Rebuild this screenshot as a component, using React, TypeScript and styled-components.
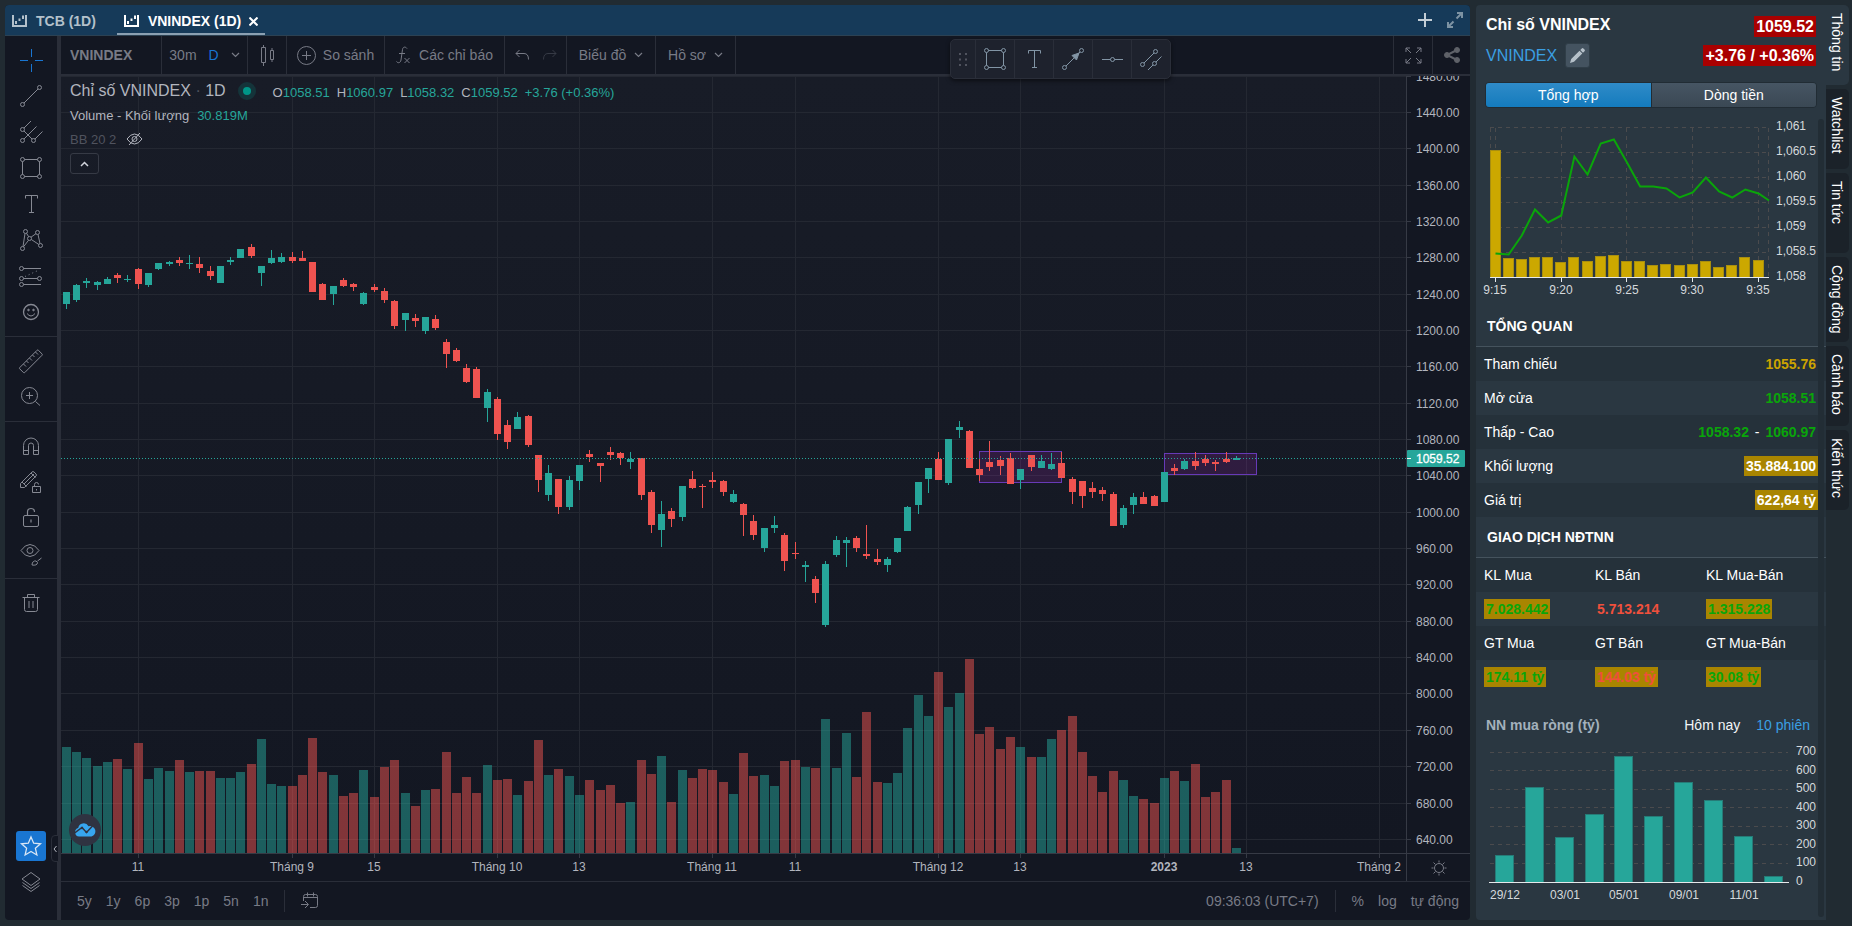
import React from "react";
import styled, { createGlobalStyle, css } from "styled-components";

const ARIAL = `"Liberation Sans", Arial, sans-serif`;
const UP = "#26a69a";
const DOWN = "#ef5350";
const AXIS = "#b2b5be";
const LINE = "#2a2e39";

const GlobalStyle = createGlobalStyle`
  *, *::before, *::after { box-sizing: border-box; }
  body { margin: 0; background: #212b32; font-family: ${ARIAL}; font-size: 14px; color: #fff; }
  button, input { font: inherit; color: inherit; background: none; border: 0; padding: 0; margin: 0; }
  button { cursor: pointer; }
  a { text-decoration: none; }
  svg { display: block; flex: none; }
`;

/* ---------- data ---------- */

type Candle = [dir: "g" | "r", high: number, top: number, bottom: number, low: number, volume: number];

const CANDLES: Candle[] = [
  ["g", 216, 216, 228, 233, 106], ["g", 208, 209, 224, 226, 101], ["g", 202, 205, 207, 212, 95],
  ["g", 205, 206, 209, 214, 87], ["g", 201, 203, 208, 208, 91], ["r", 197, 199, 202, 207, 94],
  ["g", 199, 203, 204, 206, 84], ["r", 192, 193, 208, 213, 110], ["g", 197, 197, 209, 211, 74],
  ["g", 187, 187, 193, 194, 85], ["g", 185, 186, 188, 190, 82], ["r", 181, 184, 187, 190, 93],
  ["g", 179, 187, 188, 193, 81], ["r", 181, 188, 192, 197, 82], ["r", 190, 195, 200, 204, 82],
  ["g", 190, 190, 207, 207, 75], ["g", 181, 184, 186, 189, 75], ["g", 173, 173, 182, 182, 81],
  ["r", 168, 171, 180, 182, 89], ["g", 190, 190, 197, 210, 114], ["g", 174, 182, 187, 188, 69],
  ["g", 177, 181, 186, 187, 67], ["r", 176, 181, 185, 187, 67], ["r", 175, 182, 185, 185, 78],
  ["r", 186, 186, 216, 216, 115], ["r", 207, 208, 224, 224, 81], ["g", 210, 210, 218, 229, 78],
  ["r", 202, 204, 210, 211, 57], ["r", 207, 208, 211, 215, 60], ["g", 216, 217, 228, 229, 83],
  ["r", 208, 211, 214, 216, 56], ["r", 212, 215, 224, 227, 86], ["r", 224, 225, 250, 253, 93],
  ["g", 237, 237, 244, 255, 60], ["r", 238, 242, 245, 251, 47], ["g", 241, 241, 255, 258, 63],
  ["r", 239, 243, 252, 254, 64], ["r", 263, 266, 278, 292, 101], ["r", 272, 274, 285, 286, 60],
  ["r", 288, 292, 306, 307, 76], ["r", 291, 293, 322, 322, 60], ["g", 313, 316, 332, 346, 88],
  ["r", 321, 323, 358, 364, 73], ["r", 344, 349, 366, 373, 74], ["g", 336, 341, 353, 353, 58],
  ["r", 339, 340, 369, 371, 72], ["r", 379, 379, 404, 416, 113], ["g", 389, 397, 419, 425, 78],
  ["r", 403, 403, 431, 438, 84], ["g", 400, 404, 431, 434, 77], ["g", 389, 389, 405, 414, 58],
  ["r", 374, 378, 381, 386, 73], ["r", 387, 387, 390, 406, 63], ["r", 371, 376, 379, 384, 68],
  ["r", 376, 377, 382, 389, 50], ["g", 376, 383, 386, 393, 51], ["r", 382, 382, 419, 424, 93],
  ["r", 414, 416, 449, 457, 79], ["g", 425, 438, 454, 471, 97], ["r", 432, 435, 443, 451, 51],
  ["g", 410, 410, 441, 445, 83], ["r", 395, 403, 412, 413, 75], ["r", 408, 410, 411, 432, 84],
  ["r", 396, 404, 406, 412, 83], ["r", 404, 405, 416, 420, 71], ["g", 414, 418, 426, 427, 59],
  ["r", 427, 428, 439, 460, 100], ["r", 439, 445, 459, 464, 77], ["g", 452, 452, 472, 476, 78],
  ["g", 440, 449, 452, 457, 67], ["r", 457, 459, 485, 495, 92], ["r", 466, 477, 478, 483, 93],
  ["g", 485, 489, 491, 506, 86], ["r", 500, 503, 517, 527, 85], ["g", 485, 488, 549, 551, 134],
  ["g", 460, 464, 479, 481, 85], ["g", 461, 464, 467, 491, 120], ["r", 460, 462, 472, 476, 76],
  ["r", 449, 478, 480, 483, 141], ["r", 473, 483, 486, 489, 71], ["g", 481, 483, 489, 496, 70],
  ["g", 462, 462, 476, 477, 80], ["g", 430, 431, 455, 455, 125], ["g", 406, 406, 429, 438, 158],
  ["g", 392, 392, 403, 417, 137], ["r", 376, 383, 404, 404, 181], ["g", 363, 363, 407, 409, 146],
  ["g", 345, 351, 354, 362, 160], ["r", 354, 355, 392, 392, 194], ["r", 383, 393, 399, 405, 119],
  ["r", 365, 386, 391, 395, 126], ["r", 380, 384, 390, 399, 104], ["r", 377, 382, 408, 408, 116],
  ["g", 393, 393, 404, 413, 106], ["r", 379, 379, 391, 395, 96], ["g", 379, 385, 392, 392, 96],
  ["g", 377, 388, 393, 394, 114], ["r", 376, 387, 402, 402, 123], ["r", 401, 403, 416, 428, 137],
  ["r", 405, 405, 420, 432, 101], ["r", 406, 412, 416, 422, 77], ["r", 411, 414, 418, 425, 61],
  ["r", 416, 418, 450, 450, 82], ["g", 429, 432, 449, 452, 73], ["g", 417, 421, 429, 438, 57],
  ["r", 416, 421, 428, 428, 54], ["r", 419, 420, 430, 430, 50], ["g", 396, 396, 426, 426, 75],
  ["r", 388, 392, 395, 399, 82], ["g", 383, 385, 393, 394, 72], ["r", 376, 385, 390, 394, 89],
  ["r", 379, 383, 387, 390, 56], ["r", 384, 386, 388, 395, 61], ["r", 376, 383, 386, 387, 73],
  ["g", 380, 382, 384, 384, 5],
];

const candleX = (i: number) => Math.floor(5.4 + i * 10.262);
const PRICES = Array.from({ length: 22 }, (_, k) => ({ y: Math.floor(k * 36.35), label: `${1480 - k * 40}.00` }));
const LAST_Y = 382;

const DATES: { i: number; label: string; bold?: boolean }[] = [
  { i: 7, label: "11" }, { i: 22, label: "Tháng 9" }, { i: 30, label: "15" }, { i: 42, label: "Tháng 10" },
  { i: 50, label: "13" }, { i: 63, label: "Tháng 11" }, { i: 71, label: "11" }, { i: 85, label: "Tháng 12" },
  { i: 93, label: "13" }, { i: 107, label: "2023", bold: true }, { i: 115, label: "13" }, { i: 128, label: "Tháng 2" },
];

const INTRADAY_VOLUME = [127, 19, 18, 20, 20, 15, 20, 16, 21, 22, 16, 16, 12, 13, 12, 13, 16, 10, 12, 20, 17];
const INTRADAY_LINE = [138, 139, 120, 94, 107, 100, 41, 59, 28, 24, 47, 71, 71, 73, 82, 77, 62, 76, 82, 74, 78, 85];
const NET_BUY = [27, 95, 45, 68, 126, 66, 100, 82, 46, 6];

/* ---------- icons ---------- */

const Svg = styled.svg.attrs<{ $w?: number; $h?: number }>((p) => ({
  width: p.$w ?? 28,
  height: p.$h ?? p.$w ?? 28,
  fill: "none",
  stroke: "currentColor",
  "aria-hidden": true,
}))<{ $w?: number; $h?: number }>``;

const Dot = ({ x, y, r = 2 }: { x: number; y: number; r?: number }) => <circle cx={x} cy={y} r={r} />;

const RectIcon = () => (
  <Svg viewBox="0 0 28 28">
    <Dot x={5.5} y={5.5} /><Dot x={22.5} y={5.5} /><Dot x={5.5} y={22.5} /><Dot x={22.5} y={22.5} />
    <path d="M7.5 5.5h13M7.5 22.5h13M5.5 7.5v13M22.5 7.5v13" />
  </Svg>
);
const TextIcon = () => (
  <Svg viewBox="0 0 28 28"><path d="M8.5 8.5v-3h12v3M14.5 5.5v17M12 22.5h5" /></Svg>
);
const LineIcon = () => (
  <Svg viewBox="0 0 28 28"><Dot x={22.5} y={5.5} /><Dot x={5.5} y={22.5} /><path d="M7 21L21 7" /></Svg>
);

const TOOL_GROUPS: { name: string; icon: React.ReactNode; active?: boolean }[][] = [
  [
    { name: "Con trỏ", active: true, icon: <Svg viewBox="0 0 28 28"><path d="M3 14.5h8M18 14.5h8M14.5 3v8M14.5 18v8" /></Svg> },
    { name: "Đường xu hướng", icon: <LineIcon /> },
    {
      name: "Pitchfork",
      icon: (
        <Svg viewBox="0 0 28 28">
          <Dot x={5.5} y={11.5} /><Dot x={5.5} y={22.5} /><Dot x={16.5} y={22.5} />
          <path d="M7 10l7-7M7 13l8 8M7 21L19.500 8.500M18 21l7.500-7.500" />
        </Svg>
      ),
    },
    { name: "Hình chữ nhật", icon: <RectIcon /> },
    { name: "Văn bản", icon: <TextIcon /> },
    {
      name: "Mẫu XABCD",
      icon: (
        <Svg viewBox="0 0 28 28">
          <Dot x={8.5} y={5.5} /><Dot x={20.5} y={6.5} /><Dot x={12.5} y={12.5} /><Dot x={5.5} y={22.5} /><Dot x={23.5} y={19.5} />
          <path d="M6 20.500L8 7.500M9.500 7.200l2.200 3.600M14 11.200l5-3.600M21 8.500l2 9M14.300 13.500l7.600 5M11.500 14.300l-5 6.500" />
        </Svg>
      ),
    },
    {
      name: "Dự báo",
      icon: (
        <Svg viewBox="0 0 28 28">
          <Dot x={4.5} y={6.5} /><Dot x={4.5} y={16.5} /><Dot x={22.5} y={16.5} /><Dot x={4.5} y={22.5} />
          <path d="M6.500 6.500H24M6.500 16.500h14M6.500 22.500H24" /><path d="M8 14.500L22 8" strokeDasharray="1 3" />
        </Svg>
      ),
    },
    {
      name: "Biểu tượng",
      icon: (
        <Svg viewBox="0 0 28 28">
          <circle cx="14" cy="14" r="7.500" strokeWidth="1.300" />
          <circle cx="11.500" cy="12" r="0.800" fill="currentColor" /><circle cx="16.500" cy="12" r="0.800" fill="currentColor" />
          <path d="M10 15.500q4 5 8 0" />
        </Svg>
      ),
    },
  ],
  [
    {
      name: "Thước đo",
      icon: (
        <Svg viewBox="0 0 28 28">
          <path d="M2.800 20.500L20 3.300q.7-.7 1.400 0l3.600 3.600q.7.7 0 1.400L7.800 25.500q-.7.7-1.400 0l-3.600-3.600q-.7-.7 0-1.400z" />
          <path d="M6.500 17l2.500 2.500M9.500 14l2 2M12.500 11l2.500 2.500M15.500 8l2 2M18.500 5l2.500 2.500" />
        </Svg>
      ),
    },
    {
      name: "Phóng to",
      icon: <Svg viewBox="0 0 28 28"><circle cx="12.500" cy="12.500" r="8" /><path d="M9 12.500h7M12.500 9v7M18.500 18.500l4.500 4" /></Svg>,
    },
  ],
  [
    {
      name: "Nam châm",
      icon: (
        <Svg viewBox="0 0 28 28">
          <path d="M6.500 22.500v-9a7.500 7.500 0 0 1 15 0v9h-5v-9a2.500 2.500 0 0 0-5 0v9zM6.500 18.500h5M16.500 18.500h5" />
        </Svg>
      ),
    },
    {
      name: "Vẽ liên tục",
      icon: (
        <Svg viewBox="0 0 28 28">
          <path d="M3.500 15.500L15 4q1-1 2 0l2 2q1 1 0 2L7.500 19.500h-4zM5 14l4.500 4.500M7 16L17 6M14 5l4.500 4.500" />
          <path d="M15.500 18.500h8v6h-8zM17.500 18.500v-2a2 2 0 0 1 4 0M19.500 21v1.500" />
        </Svg>
      ),
    },
    {
      name: "Khóa hình vẽ",
      icon: <Svg viewBox="0 0 28 28"><rect x="6.500" y="11.500" width="15" height="11" rx="1.500" /><path d="M10.500 11.500V8a3.500 3.500 0 0 1 7 0M14 15.500v3" strokeWidth="1.200" /></Svg>,
    },
    {
      name: "Ẩn hình vẽ",
      icon: (
        <Svg viewBox="0 0 28 28">
          <path d="M4 10.500Q8 4.500 13 4.500t9 6q-4 6-9 6t-9-6z" /><circle cx="13" cy="10.500" r="3" />
          <path d="M15 25c0-3 2-4.500 4-4l1.500 1.500C20.500 25 18 25.500 15 25zM20.500 21l4-3" />
        </Svg>
      ),
    },
  ],
  [
    {
      name: "Xóa hình vẽ",
      icon: <Svg viewBox="0 0 28 28"><path d="M5.500 8.500h17M7.500 8.500v12q0 2 2 2h9q2 0 2-2v-12M10.500 8V5.500h7V8M12 12v7M16 12v7" /></Svg>,
    },
  ],
];

const BarsIcon = () => (
  <Svg $w={16} $h={14} viewBox="0 0 16 14">
    <path d="M1 1v11h14M14 1v11" strokeWidth="2" />
    <path d="M4 10V7M7.500 7V4.500M11 5V1.500" strokeWidth="2" />
  </Svg>
);
const Chevron = () => <Svg $w={9} $h={6} viewBox="0 0 9 6"><path d="M1 1l3.500 3.500L8 1" strokeWidth="1.200" /></Svg>;

/* ---------- frame ---------- */

const Page = styled.div`
  display: flex;
  gap: 6px;
  height: 100vh;
  min-height: 640px;
  padding: 5px 3px 6px 5px;
`;
const Workspace = styled.main`
  flex: 1;
  min-width: 0;
  display: flex;
  flex-direction: column;
  border-radius: 4px;
  overflow: hidden;
  background: #131722;
`;
const TabBar = styled.nav`
  display: flex;
  align-items: stretch;
  gap: 14px;
  height: 31px;
  padding: 0 7px 0 0;
  background: #163a59;
  border-bottom: 1px solid #2c4152;
`;
const ChartTab = styled.button<{ $active?: boolean }>`
  display: flex;
  align-items: center;
  gap: 8px;
  padding: 4px 7px 0;
  font-weight: bold;
  color: ${(p) => (p.$active ? "#fff" : "#b4c1cb")};
  border-bottom: 2px solid ${(p) => (p.$active ? "#8ba0b2" : "transparent")};
`;
const TabBarEnd = styled.div`
  display: flex;
  align-items: center;
  gap: 15px;
  margin-left: auto;
`;
const IconButton = styled.button<{ $color?: string }>`
  display: flex;
  align-items: center;
  justify-content: center;
  color: ${(p) => p.$color ?? "#787b86"};
`;
const Body = styled.div`
  flex: 1;
  min-height: 0;
  display: flex;
`;
const ToolColumn = styled.aside`
  position: relative;
  display: flex;
  flex-direction: column;
  width: 56px;
  border-right: 4px solid ${LINE};
`;
const ToolGroup = styled.div`
  display: flex;
  flex-direction: column;
  padding: 6px 0;
  border-bottom: 1px solid ${LINE};
  &:nth-last-child(-n + 3) { border-bottom: 0; }
`;
const Tool = styled.button<{ $active?: boolean }>`
  display: flex;
  align-items: center;
  justify-content: center;
  height: 36px;
  color: ${(p) => (p.$active ? "#1976d2" : "#868993")};
`;
const BottomTools = styled.div`
  display: flex;
  flex-direction: column;
  align-items: center;
  margin-top: auto;
  padding-bottom: 20px;
`;
const Favourite = styled.button`
  display: flex;
  align-items: center;
  justify-content: center;
  width: 30px;
  height: 30px;
  margin-bottom: 3px;
  border-radius: 3px;
  background: #1976d2;
  color: #d8e6f5;
`;
const Collapse = styled.button`
  position: absolute;
  right: -2px;
  bottom: 58px;
  width: 8px;
  height: 27px;
  display: flex;
  align-items: center;
  justify-content: center;
  background: #131722;
  border: 1px solid ${LINE};
  border-radius: 4px 0 0 4px;
  color: #b2b5be;
`;
const ChartColumn = styled.section`
  flex: 1;
  min-width: 0;
  display: flex;
  flex-direction: column;
`;

/* ---------- top toolbar ---------- */

const Toolbar = styled.div`
  position: relative;
  display: flex;
  height: 40px;
  border-bottom: 2px solid ${LINE};
  color: #787b86;
`;
const Cell = styled.div<{ $w: number; $gap?: number; $end?: boolean }>`
  display: flex;
  align-items: center;
  justify-content: center;
  gap: ${(p) => p.$gap ?? 8}px;
  width: ${(p) => p.$w}px;
  flex: none;
  ${(p) => (p.$end ? css`border-left: 1px solid ${LINE};` : css`border-right: 1px solid ${LINE};`)}
`;
const SymbolInput = styled.input`
  width: 100%;
  height: 100%;
  padding: 0 9px;
  font-weight: bold;
`;
const TextButton = styled.button<{ $active?: boolean; $gap?: number }>`
  display: flex;
  align-items: center;
  gap: ${(p) => p.$gap ?? 6}px;
  color: ${(p) => (p.$active ? "#1976d2" : "inherit")};
`;
const Spacer = styled.div`flex: 1;`;
const FloatingTools = styled.div`
  position: absolute;
  z-index: 2;
  top: 3px;
  left: 889px;
  display: flex;
  height: 40px;
  background: #1e222d;
  border: 1px solid ${LINE};
  border-radius: 5px;
  box-shadow: 0 2px 4px rgba(0, 0, 0, 0.5);
  overflow: hidden;
`;
const Grip = styled.div`
  display: flex;
  align-items: center;
  justify-content: center;
  width: 24px;
  color: #50535e;
`;
const FloatButton = styled.button`
  display: flex;
  align-items: center;
  justify-content: center;
  width: 39px;
  border-left: 1px solid ${LINE};
  color: #8295a5;
`;

/* ---------- chart ---------- */

const ChartArea = styled.div`
  position: relative;
  flex: 1;
  min-height: 0;
  display: flex;
`;
const Plot = styled.div`
  flex: 1;
  min-width: 0;
  background: linear-gradient(#181c27, #131722);
`;
const Canvas = styled.svg`
  width: 100%;
  height: 100%;
`;
const PriceAxis = styled.div`
  width: 64px;
  border-left: 1px solid #363a45;
`;
const TimeRow = styled.div`
  display: flex;
  height: 29px;
  border-top: 1px solid #363a45;
  border-bottom: 1px solid ${LINE};
`;
const TimeAxis = styled.div`
  flex: 1;
  min-width: 0;
`;
const TimeEnd = styled.div`
  display: flex;
  align-items: center;
  justify-content: center;
  width: 64px;
  border-left: 1px solid #363a45;
`;
const Legend = styled.div`
  position: absolute;
  top: 3px;
  left: 9px;
  display: flex;
  flex-direction: column;
  align-items: flex-start;
`;
const LegendRow = styled.div<{ $gap?: number; $muted?: boolean }>`
  display: flex;
  align-items: center;
  gap: ${(p) => p.$gap ?? 8}px;
  height: 24px;
  font-size: 13px;
  color: ${(p) => (p.$muted ? "#50535e" : "#b2b5be")};
`;
const SymbolTitle = styled.h1`
  margin: 0;
  font-size: 16px;
  font-weight: normal;
`;
const Separator = styled.span`color: #50535e;`;
const Ohlc = styled.div`
  display: flex;
  gap: 7px;
  padding: 3px 0 0 9px;
`;
const Value = styled.span`color: ${UP};`;
const Status = styled.span`
  width: 18px;
  height: 18px;
  margin-left: 4px;
  border: 5px solid #14343a;
  border-radius: 50%;
  background: #009688;
`;
const LegendToggle = styled.button`
  display: flex;
  align-items: center;
  justify-content: center;
  width: 29px;
  height: 21px;
  margin-top: 2px;
  border: 1px solid #363a45;
  border-radius: 3px;
  color: #d1d4dc;
`;
const Watermark = styled.a`
  position: absolute;
  left: 8px;
  bottom: 7px;
  display: flex;
  align-items: center;
  justify-content: center;
  width: 32px;
  height: 32px;
  border-radius: 50%;
  background: #2f3341;
`;
const BottomBar = styled.div`
  display: flex;
  align-items: center;
  height: 38px;
  padding: 0 11px 0 16px;
  color: #787b86;
`;
const Ranges = styled.div`
  display: flex;
  gap: 14px;
`;
const VRule = styled.div`
  width: 1px;
  height: 22px;
  margin: 0 16px;
  background: ${LINE};
`;
const Scales = styled.div`
  display: flex;
  gap: 14px;
`;

/* ---------- info panel ---------- */

const Side = styled.aside`
  display: flex;
  width: 373px;
  flex: none;
`;
const Panel = styled.section`
  position: relative;
  display: flex;
  flex-direction: column;
  width: 350px;
  background: #2a3741;
  border-radius: 4px 0 0 4px;
  overflow: hidden;
`;
const PanelHead = styled.header`
  display: grid;
  grid-template-columns: auto auto;
  justify-content: space-between;
  align-items: center;
  row-gap: 4px;
  flex: none;
  padding: 8px 10px 14px;
  font-size: 16px;
`;
const PanelTitle = styled.h2`
  margin: 0;
  padding-bottom: 2px;
  font-size: 16px;
  line-height: 24px;
`;
const Ticker = styled.div`
  display: flex;
  align-items: center;
  gap: 8px;
`;
const Link = styled.a`color: #3b9fe2;`;
const EditButton = styled.button`
  display: flex;
  align-items: center;
  justify-content: center;
  width: 25px;
  height: 25px;
  border-radius: 3px;
  background: #445360;
  border: 1px solid #303e48;
  color: #b5c0c9;
`;
const PriceTag = styled.strong`
  justify-self: end;
  padding: 0 2px;
  line-height: 21px;
  background: #a90000;
`;
const Segments = styled.div`
  display: flex;
  flex: none;
  height: 26px;
  margin: 0 9px;
  border: 1px solid #212c34;
  border-radius: 4px;
  overflow: hidden;
`;
const Segment = styled.button<{ $active?: boolean }>`
  flex: 1;
  background: ${(p) => (p.$active ? "linear-gradient(#2f8bc8, #147bbd)" : "linear-gradient(#465563, #3a4854)")};
  & + & { border-left: 1px solid #212c34; }
`;
const MiniChart = styled.div<{ $h: number }>`
  height: ${(p) => p.$h}px;
  flex: none;
`;
const SectionTitle = styled.h3`
  margin: 0;
  height: 41px;
  flex: none;
  padding: 0 11px;
  font-size: 14px;
  line-height: 40px;
  border-bottom: 1px solid #45535d;
`;
const Table = styled.table`
  width: 100%;
  flex: none;
  border-collapse: collapse;
  table-layout: fixed;
  tr:nth-child(odd) { background: #25313a; }
  th, td { height: 34px; padding: 0 0 0 8px; font-weight: normal; text-align: left; }
`;
const Overview = styled(Table)`
  td { padding: 0 8px 0 0; text-align: right; }
`;
const Trades = styled(Table)`
  th:nth-child(-n + 2), td:nth-child(-n + 2) { width: 111px; }
`;
const Num = styled.strong<{ $color: string; $flash?: boolean }>`
  display: inline-block;
  padding: 0 2px;
  line-height: 20px;
  color: ${(p) => p.$color};
  background: ${(p) => (p.$flash ? "#a98500" : "transparent")};
`;
const NetHead = styled.div`
  display: flex;
  align-items: center;
  gap: 16px;
  height: 46px;
  flex: none;
  padding: 16px 16px 0 10px;
`;
const NetTitle = styled.strong`
  flex: 1;
  color: #a3b1bc;
`;
const Period = styled.button<{ $link?: boolean }>`
  color: ${(p) => (p.$link ? "#3b9fe2" : "#f2f5f7")};
`;
const Scrollbar = styled.div`
  position: absolute;
  right: 2px;
  top: 114px;
  bottom: 3px;
  width: 6px;
  border-radius: 3px;
  background: #222d35;
`;
const SideTabs = styled.nav`
  display: flex;
  flex-direction: column;
  gap: 4px;
  width: 23px;
`;
const SideTab = styled.button<{ $active?: boolean }>`
  min-height: 80px;
  padding: 8px 2px 8px 0;
  writing-mode: vertical-rl;
  text-align: start;
  line-height: 21px;
  border-radius: 0 5px 5px 0;
  background: ${(p) => (p.$active ? "#2a3741" : "#1b2229")};
`;

const GREEN = "#0aa50a";
const RED = "#f0503c";

const PriceChart = () => (
  <Canvas shapeRendering="crispEdges" role="img" aria-label="Biểu đồ giá VNINDEX">
    {PRICES.map((p) => <rect key={p.y} x="0" y={p.y} width="100%" height="1" fill="#242832" />)}
    {DATES.map((d) => <rect key={d.i} x={candleX(d.i)} y="0" width="1" height="100%" fill="#242832" />)}
    <svg y="100%" overflow="visible">
      {CANDLES.map(([dir, , , , , v], i) => (
        <rect key={i} x={candleX(i) - 4} y={-v} width="9" height={v} fill={dir === "g" ? UP : DOWN} opacity="0.5" />
      ))}
    </svg>
    <rect x="918.5" y="375.5" width="82" height="31" fill="rgba(156,39,176,0.2)" stroke="#673ab7" />
    <rect x="1103.5" y="377.5" width="92" height="21" fill="rgba(156,39,176,0.2)" stroke="#673ab7" />
    {CANDLES.map(([dir, h, t, b, l], i) => (
      <g key={i} fill={dir === "g" ? UP : DOWN}>
        <rect x={candleX(i)} y={h} width="1" height={l - h} />
        <rect x={candleX(i) - 3} y={t} width="7" height={b - t} />
      </g>
    ))}
    <line x1="0" x2="100%" y1={LAST_Y + 0.5} y2={LAST_Y + 0.5} stroke={UP} strokeDasharray="1 2" />
  </Canvas>
);

const IntradayChart = () => (
  <Canvas role="img" aria-label="Diễn biến trong phiên">
    <g stroke="#4b4b4d" strokeDasharray="4 4" shapeRendering="crispEdges">
      {[0, 1, 2, 3, 4, 5].map((k) => <path key={k} d={`M14 ${19.5 + k * 25}H293`} />)}
      {[14.5, 19.5, 85.5, 150.5, 216.5, 282.5, 292.5].map((x) => <path key={x} d={`M${x} 19.500V169`} />)}
    </g>
    {INTRADAY_VOLUME.map((v, i) => (
      <rect key={i} x={Math.floor(14 + i * 13.15) + 0.5} y={169.5 - v} width="10" height={v} fill="#cca800" stroke="#a88e10" />
    ))}
    <path d="M14 169.500H293M19.500 169v5M85.500 169v5M150.500 169v5M216.500 169v5M282.500 169v5" stroke="#e6e9eb" shapeRendering="crispEdges" />
    <polyline
      points={INTRADAY_LINE.map((y, i) => `${Math.min(19.5 + i * 13.15, 293)},${y + 7.5}`).join(" ")}
      fill="none" stroke="#0aa50a" strokeWidth="2"
    />
    <g fill="#d5d9dc" fontSize="12">
      {["1,061", "1,060.5", "1,060", "1,059.5", "1,059", "1,058.5", "1,058"].map((t, k) => (
        <text key={t} x="300" y={22 + k * 25}>{t}</text>
      ))}
      {["9:15", "9:20", "9:25", "9:30", "9:35"].map((t, k) => (
        <text key={t} x={19 + Math.round(k * 65.75)} y="186" textAnchor="middle">{t}</text>
      ))}
    </g>
  </Canvas>
);

const NetChart = () => (
  <Canvas role="img" aria-label="Nước ngoài mua ròng 10 phiên">
    <g stroke="#4b4b4d" strokeDasharray="4 4" shapeRendering="crispEdges">
      {[0, 1, 2, 3, 4, 5, 6].map((k) => <path key={k} d={`M14 ${Math.floor(k * 18.57) + 12.5}H312`} />)}
    </g>
    {NET_BUY.map((v, i) => (
      <rect key={i} x={Math.round(20 + i * 29.87) - 0.5} y={142.5 - v} width="18" height={v} fill={UP} stroke="#267b77" />
    ))}
    <path d="M13 142.500H313" stroke="#e6e9eb" />
    <g fill="#d5d9dc" fontSize="12">
      {[700, 600, 500, 400, 300, 200, 100, 0].map((t, k) => (
        <text key={t} x="320" y={Math.round(15 + k * 18.57)}>{t}</text>
      ))}
      {["29/12", "03/01", "05/01", "09/01", "11/01"].map((t, k) => (
        <text key={t} x={Math.round(29 + k * 59.74)} y="159" textAnchor="middle">{t}</text>
      ))}
    </g>
  </Canvas>
);

export default function App() {
  return (
    <>
      <GlobalStyle />
      <Page>
        <Workspace>
          <TabBar>
            <ChartTab><BarsIcon />TCB (1D)</ChartTab>
            <ChartTab $active>
              <BarsIcon />VNINDEX (1D)
              <Svg $w={9} viewBox="0 0 9 9"><path d="M.5.5l8 8M8.500.5l-8 8" strokeWidth="2" /></Svg>
            </ChartTab>
            <TabBarEnd>
              <IconButton $color="#c3ced6" aria-label="Thêm biểu đồ">
                <Svg $w={14} viewBox="0 0 14 14"><path d="M7 0v14M0 7h14" strokeWidth="2" /></Svg>
              </IconButton>
              <IconButton $color="#7d93a3" aria-label="Mở rộng">
                <Svg $w={16} viewBox="0 0 16 16"><path d="M10 1h5v5M15 1L9.500 6.500M6 15H1v-5M1 15l5.500-5.500" strokeWidth="2" /></Svg>
              </IconButton>
            </TabBarEnd>
          </TabBar>
          <Body>
            <ToolColumn>
              {TOOL_GROUPS.map((group, g) => (
                <ToolGroup key={g}>
                  {group.map((t) => <Tool key={t.name} $active={t.active} aria-label={t.name}>{t.icon}</Tool>)}
                </ToolGroup>
              ))}
              <BottomTools>
                <Favourite aria-label="Công cụ yêu thích">
                  <Svg viewBox="0 0 28 28"><path d="M14 5l2.700 6.200 6.800.6-5.100 4.500 1.500 6.700-5.900-3.500L8.100 23l1.500-6.700-5.100-4.500 6.800-.6z" strokeWidth="1.300" /></Svg>
                </Favourite>
                <Tool aria-label="Cây đối tượng">
                  <Svg viewBox="0 0 28 28"><path d="M14 4.500l9 6.500-9 6.500L5 11zM5.500 14.500l8.500 6 8.500-6M5.500 17.500l8.500 6 8.500-6" /></Svg>
                </Tool>
              </BottomTools>
              <Collapse aria-label="Thu gọn">
                <Svg $w={4} $h={8} viewBox="0 0 4 8"><path d="M3.500 1L1 4l2.500 3" /></Svg>
              </Collapse>
            </ToolColumn>
            <ChartColumn>
              <Toolbar>
                <Cell $w={101}><SymbolInput aria-label="Mã" defaultValue="VNINDEX" /></Cell>
                <Cell $w={86} $gap={12}>
                  <TextButton>30m</TextButton>
                  <TextButton $active>D</TextButton>
                  <IconButton aria-label="Khung thời gian"><Chevron /></IconButton>
                </Cell>
                <Cell $w={39}>
                  <IconButton aria-label="Kiểu nến">
                    <Svg viewBox="0 0 28 28"><path d="M8.500 6.500h4v15h-4zM10.500 4v2.500M10.500 21.500V25M17.500 9.500h3v9h-3zM19 7v2.500M19 18.500V21" /></Svg>
                  </IconButton>
                </Cell>
                <Cell $w={98}>
                  <TextButton $gap={7}>
                    <Svg $w={19} viewBox="0 0 19 19"><circle cx="9.500" cy="9.500" r="9" /><path d="M9.500 5v9M5 9.500h9" /></Svg>
                    So sánh
                  </TextButton>
                </Cell>
                <Cell $w={120}>
                  <TextButton $gap={8}>
                    <Svg $w={15} $h={18} viewBox="0 0 15 18">
                      <path d="M11 2.500C9.500.5 7 .5 6.500 3.500L5 14c-.5 3-3 3.500-4.500 1.500M3 7.500h6M8.500 12l5 5M13.500 12l-5 5" />
                    </Svg>
                    Các chỉ báo
                  </TextButton>
                </Cell>
                <Cell $w={62} $gap={14}>
                  <IconButton aria-label="Hoàn tác"><Svg $w={14} $h={12} viewBox="0 0 14 12"><path d="M4.500 1L1 4.500 4.500 8M1 4.500h8q4.500 0 4.500 6" /></Svg></IconButton>
                  <IconButton $color="#363a45" aria-label="Làm lại"><Svg $w={14} $h={12} viewBox="0 0 14 12"><path d="M9.500 1L13 4.500 9.500 8M13 4.500H5q-4.500 0-4.500 6" /></Svg></IconButton>
                </Cell>
                <Cell $w={89}><TextButton $gap={8}>Biểu đồ<Chevron /></TextButton></Cell>
                <Cell $w={80}><TextButton $gap={8}>Hồ sơ<Chevron /></TextButton></Cell>
                <Spacer />
                <Cell $w={39} $end>
                  <IconButton aria-label="Toàn màn hình">
                    <Svg $w={17} viewBox="0 0 17 17"><path d="M1 5V1h4M1 1l5 5M12 1h4v4M16 1l-5 5M16 12v4h-4M16 16l-5-5M5 16H1v-4M1 16l5-5" /></Svg>
                  </IconButton>
                </Cell>
                <Cell $w={38} $end>
                  <IconButton $color="#5f6269" aria-label="Chia sẻ">
                    <Svg $w={16} viewBox="0 0 16 16"><path d="M13 3L3 8l10 5" strokeWidth="2" /><g fill="currentColor"><Dot x={13} y={3} r={2.5} /><Dot x={3} y={8} r={2.5} /><Dot x={13} y={13} r={2.5} /></g></Svg>
                  </IconButton>
                </Cell>
                <FloatingTools>
                  <Grip>
                    <Svg $w={8} $h={13} viewBox="0 0 8 13"><path d="M0 1h2M6 1h2M0 6.500h2M6 6.500h2M0 12h2M6 12h2" strokeWidth="2" /></Svg>
                  </Grip>
                  <FloatButton aria-label="Hình chữ nhật"><RectIcon /></FloatButton>
                  <FloatButton aria-label="Văn bản"><TextIcon /></FloatButton>
                  <FloatButton aria-label="Mũi tên">
                    <Svg viewBox="0 0 28 28"><Dot x={22.5} y={5.5} /><Dot x={5.5} y={22.5} /><path d="M7 21L21 7" /><path d="M20 8l-2.500 7-4.500-4.500z" fill="currentColor" /></Svg>
                  </FloatButton>
                  <FloatButton aria-label="Đường ngang"><Svg viewBox="0 0 28 28"><Dot x={14.5} y={14.5} /><path d="M4 14.500h8.500M16.500 14.500H25" /></Svg></FloatButton>
                  <FloatButton aria-label="Kênh song song">
                    <Svg viewBox="0 0 28 28"><Dot x={18.5} y={6.5} /><Dot x={5.5} y={19.5} /><Dot x={17.5} y={18.5} /><path d="M7 18L17 8M11 25l5-5M19 17l5.500-5.500" /></Svg>
                  </FloatButton>
                </FloatingTools>
              </Toolbar>
              <ChartArea>
                <Plot><PriceChart /></Plot>
                <PriceAxis>
                  <Canvas fontSize="12" fill={AXIS}>
                    {PRICES.map((p) => (
                      <g key={p.y}>
                        <rect x="0" y={p.y} width="4" height="1" fill="#363a45" />
                        <text x="9" y={p.y + 5}>{p.label}</text>
                      </g>
                    ))}
                    <rect x="0" y={LAST_Y - 8} width="58" height="17" rx="1" fill={UP} />
                    <rect x="0" y={LAST_Y} width="4" height="1" fill="#fff" />
                    <text x="9" y={LAST_Y + 5} fill="#fff" stroke="#fff" strokeWidth="0.300">1059.52</text>
                  </Canvas>
                </PriceAxis>
                <Legend>
                  <LegendRow>
                    <SymbolTitle>Chỉ số VNINDEX <Separator>·</Separator> 1D</SymbolTitle>
                    <Status />
                    <Ohlc>
                      <span>O<Value>1058.51</Value></span>
                      <span>H<Value>1060.97</Value></span>
                      <span>L<Value>1058.32</Value></span>
                      <span>C<Value>1059.52</Value></span>
                      <Value>+3.76 (+0.36%)</Value>
                    </Ohlc>
                  </LegendRow>
                  <LegendRow><span>Volume - Khối lượng</span><Value>30.819M</Value></LegendRow>
                  <LegendRow $gap={10} $muted>
                    <span>BB 20 2</span>
                    <IconButton $color="#b2b5be" aria-label="Hiện BB">
                      <Svg $w={17} $h={14} viewBox="0 0 17 14"><path d="M1 7q3.500-5 7.500-5T16 7q-3.500 5-7.500 5T1 7zM14 1L3 13" /><circle cx="8.500" cy="7" r="2.500" /></Svg>
                    </IconButton>
                  </LegendRow>
                  <LegendToggle aria-label="Thu gọn chú giải"><Svg $w={9} $h={6} viewBox="0 0 9 6"><path d="M1 5l3.500-3.500L8 5" strokeWidth="1.500" /></Svg></LegendToggle>
                </Legend>
                <Watermark href="#" aria-label="TradingView">
                  <svg width="22" height="14" viewBox="0 0 22 14">
                    <path d="M5 13.500a4.300 4.300 0 0 1-.8-8.400A5.500 5.500 0 0 1 14.500 3.200 5.200 5.200 0 0 1 17.500 13.500z" fill="#37a6ef" />
                    <path d="M0 10.500L8 4.500l4.500 5L18.500 3" fill="none" stroke="#2f3341" strokeWidth="1.500" />
                    <circle cx="8" cy="5" r="1.200" fill="#2f3341" /><circle cx="12.500" cy="9" r="1.200" fill="#2f3341" />
                  </svg>
                </Watermark>
              </ChartArea>
              <TimeRow>
                <TimeAxis>
                  <Canvas fontSize="12" fill={AXIS}>
                    {DATES.map((d) => (
                      <g key={d.i}>
                        <rect x={candleX(d.i)} y="0" width="1" height="4" fill="#363a45" />
                        <text x={candleX(d.i)} y="17" textAnchor="middle" fontWeight={d.bold ? "bold" : "normal"}>{d.label}</text>
                      </g>
                    ))}
                  </Canvas>
                </TimeAxis>
                <TimeEnd>
                  <IconButton aria-label="Cài đặt trục">
                    <Svg $w={16} viewBox="0 0 16 16"><circle cx="8" cy="8" r="4.500" /><path d="M8 .5v2M8 13.500v2M.5 8h2M13.500 8h2M2.500 2.500L4.500 4.500M11.500 11.500l2 2M2.500 13.500l2-2M11.500 4.500l2-2" /></Svg>
                  </IconButton>
                </TimeEnd>
              </TimeRow>
              <BottomBar>
                <Ranges>
                  {["5y", "1y", "6p", "3p", "1p", "5n", "1n"].map((r) => <TextButton key={r}>{r}</TextButton>)}
                </Ranges>
                <VRule />
                <IconButton aria-label="Đi đến ngày">
                  <Svg $w={18} viewBox="0 0 18 18"><path d="M2.500 9V4.500q0-2 2-2h10q2 0 2 2v9q0 2-2 2H9M2.500 5.500h14M6.500.5v4M12.500.5v4M0 12.500h7M4 9l3.500 3.500L4 16" /></Svg>
                </IconButton>
                <Spacer />
                <TextButton>09:36:03 (UTC+7)</TextButton>
                <VRule />
                <Scales><TextButton>%</TextButton><TextButton>log</TextButton><TextButton>tự động</TextButton></Scales>
              </BottomBar>
            </ChartColumn>
          </Body>
        </Workspace>

        <Side>
          <Panel>
            <PanelHead>
              <PanelTitle>Chỉ số VNINDEX</PanelTitle>
              <PriceTag>1059.52</PriceTag>
              <Ticker>
                <Link href="#">VNINDEX</Link>
                <EditButton aria-label="Sửa">
                  <svg width="15" height="15" viewBox="0 0 15 15" fill="currentColor"><path d="M0 15l1.200-4L9.500 2.700l2.800 2.800L4 13.800zM10.300 2l1.500-1.500q.8-.8 1.600 0l1.100 1.100q.8.8 0 1.600L13 4.700z" /></svg>
                </EditButton>
              </Ticker>
              <PriceTag>+3.76 / +0.36%</PriceTag>
            </PanelHead>
            <Segments>
              <Segment $active>Tổng hợp</Segment>
              <Segment>Dòng tiền</Segment>
            </Segments>
            <MiniChart $h={198}><IntradayChart /></MiniChart>
            <SectionTitle>TỔNG QUAN</SectionTitle>
            <Overview>
              <tbody>
                <tr><th scope="row">Tham chiếu</th><td><Num $color="#cca300">1055.76</Num></td></tr>
                <tr><th scope="row">Mở cửa</th><td><Num $color={GREEN}>1058.51</Num></td></tr>
                <tr><th scope="row">Thấp - Cao</th><td><Num $color={GREEN}>1058.32</Num> - <Num $color={GREEN}>1060.97</Num></td></tr>
                <tr><th scope="row">Khối lượng</th><td><Num $color="#fff" $flash>35.884.100</Num></td></tr>
                <tr><th scope="row">Giá trị</th><td><Num $color="#fff" $flash>622,64 tỷ</Num></td></tr>
              </tbody>
            </Overview>
            <SectionTitle>GIAO DỊCH NĐTNN</SectionTitle>
            <Trades>
              <tbody>
                <tr><th>KL Mua</th><th>KL Bán</th><th>KL Mua-Bán</th></tr>
                <tr>
                  <td><Num $color={GREEN} $flash>7.028.442</Num></td>
                  <td><Num $color={RED}>5.713.214</Num></td>
                  <td><Num $color={GREEN} $flash>1.315.228</Num></td>
                </tr>
                <tr><th>GT Mua</th><th>GT Bán</th><th>GT Mua-Bán</th></tr>
                <tr>
                  <td><Num $color={GREEN} $flash>174.11 tỷ</Num></td>
                  <td><Num $color={RED} $flash>144.03 tỷ</Num></td>
                  <td><Num $color={GREEN} $flash>30.08 tỷ</Num></td>
                </tr>
              </tbody>
            </Trades>
            <NetHead>
              <NetTitle>NN mua ròng (tỷ)</NetTitle>
              <Period>Hôm nay</Period>
              <Period $link>10 phiên</Period>
            </NetHead>
            <MiniChart $h={170}><NetChart /></MiniChart>
            <Scrollbar />
          </Panel>
          <SideTabs>
            {["Thông tin", "Watchlist", "Tin tức", "Cộng đồng", "Cảnh báo", "Kiến thức"].map((t, i) => (
              <SideTab key={t} $active={i === 0}>{t}</SideTab>
            ))}
          </SideTabs>
        </Side>
      </Page>
    </>
  );
}
